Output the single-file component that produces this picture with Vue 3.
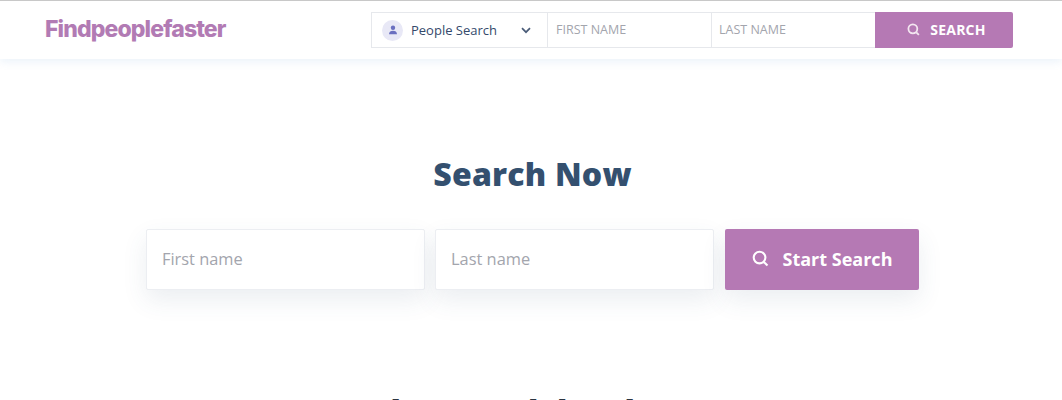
<template>
  <div class="page">
    <header class="top-bar">
      <div class="logo">Findpeoplefaster</div>
      <form class="mini-search" @submit.prevent>
        <div class="type-select">
          <span class="avatar">
            <svg width="10" height="10" viewBox="0 0 10 10">
              <circle cx="5" cy="2.8" r="2.2" fill="#6a6fc0" />
              <path d="M1 9.2c0-2.3 1.8-3.4 4-3.4s4 1.1 4 3.4z" fill="#6a6fc0" />
            </svg>
          </span>
          <span class="type-label">People Search</span>
          <svg class="chevron" width="10" height="7" viewBox="0 0 10 7">
            <path d="M1 1.2l4 4 4-4" fill="none" stroke="#4a5c78" stroke-width="1.7" />
          </svg>
        </div>
        <input class="mini-input first" placeholder="FIRST NAME" />
        <input class="mini-input last" placeholder="LAST NAME" />
        <button class="mini-btn">
          <svg width="13" height="13" viewBox="0 0 14 14">
            <circle cx="6.3" cy="6.3" r="4.8" fill="none" stroke="#f3e6f0" stroke-width="1.9" />
            <path d="M10 10l2.8 2.8" stroke="#f3e6f0" stroke-width="1.9" />
          </svg>
          <span>SEARCH</span>
        </button>
      </form>
    </header>

    <section class="search-now">
      <h1 class="title">Search Now</h1>
      <form class="big-search" @submit.prevent>
        <input class="big-input" placeholder="First name" />
        <input class="big-input" placeholder="Last name" />
        <button class="big-btn">
          <svg width="17" height="17" viewBox="0 0 18 18">
            <circle cx="8" cy="8" r="6.2" fill="none" stroke="#fff" stroke-width="2.2" />
            <path d="M12.6 12.6l3.8 3.8" stroke="#fff" stroke-width="2.2" />
          </svg>
          <span>Start Search</span>
        </button>
      </form>
    </section>

    <section class="why">
      <h2 class="why-title">Why Search by Phone</h2>
    </section>
  </div>
</template>

<script setup>
</script>

<style scoped>
.page {
  font-family: "Open Sans", sans-serif;
  background: #fff;
  height: 400px;
  overflow: hidden;
}
.top-bar {
  height: 59px;
  box-sizing: border-box;
  border-top: 1px solid #c8c8c8;
  padding: 11px 49px 0 45px;
  display: flex;
  justify-content: space-between;
  align-items: flex-start;
  background: #fff;
  box-shadow: 0 3px 8px rgba(120, 170, 220, 0.14);
  position: relative;
}
.logo {
  font-family: Inter, sans-serif;
  font-weight: 800;
  font-size: 23px;
  letter-spacing: -0.88px;
  line-height: 34px;
  color: #b27bb4;
}
.mini-search {
  display: flex;
  height: 36px;
}
.type-select {
  width: 176px;
  box-sizing: border-box;
  border: 1px solid #e6e8ec;
  border-right: none;
  display: flex;
  align-items: center;
  padding-left: 10px;
}
.avatar {
  width: 21px;
  height: 21px;
  border-radius: 50%;
  background: #e8e8f6;
  display: flex;
  align-items: center;
  justify-content: center;
}
.type-label {
  margin-left: 8px;
  padding-bottom: 1px;
  font-size: 13px;
  font-weight: 500;
  color: #34496b;
}
.chevron {
  margin-left: 24px;
}
.mini-input {
  height: 36px;
  box-sizing: border-box;
  border: 1px solid #e6e8ec;
  border-right: none;
  padding: 0 7px 1px 8px;
  font-family: inherit;
  font-size: 12.5px;
  outline: none;
}
.mini-input.first {
  width: 164px;
}
.mini-input.last {
  width: 164px;
  padding-left: 7px;
}
.mini-input::placeholder {
  color: #a3a5ad;
  opacity: 1;
}
.mini-btn {
  width: 138px;
  border: none;
  border-radius: 0 2px 2px 0;
  background: #b579b4;
  color: #fff;
  font-family: inherit;
  font-size: 14px;
  font-weight: 700;
  letter-spacing: 0.2px;
  display: flex;
  align-items: center;
  justify-content: center;
  gap: 10px;
  padding: 0 0 2px 5px;
}
.search-now {
  display: flex;
  flex-direction: column;
  align-items: center;
  padding-left: 3px;
}
.title {
  margin: 95px 0 0;
  font-size: 32px;
  line-height: 40px;
  font-weight: 800;
  letter-spacing: 0.2px;
  color: #34506f;
}
.big-search {
  display: flex;
  margin-top: 35px;
  height: 61px;
  gap: 10px;
}
.big-input {
  width: 279px;
  box-sizing: border-box;
  border: 1px solid #eceef2;
  border-radius: 2px;
  padding: 0 15px 2px;
  font-family: inherit;
  font-size: 16.4px;
  outline: none;
  background: #fff;
  box-shadow: 0 10px 25px rgba(60, 90, 120, 0.1);
}
.big-input::placeholder {
  color: #a3a5ad;
  opacity: 1;
}
.big-btn {
  width: 194px;
  margin-left: 1px;
  border: none;
  border-radius: 2px;
  background: #b579b4;
  color: #fff;
  font-family: inherit;
  font-size: 18px;
  font-weight: 700;
  display: flex;
  align-items: center;
  justify-content: center;
  gap: 14px;
  padding: 0 0 2px;
  box-shadow: 0 10px 25px rgba(60, 90, 120, 0.1);
}
.why {
  text-align: center;
  margin-top: 101px;
  padding-left: 2px;
}
.why-title {
  margin: 0;
  font-size: 32px;
  line-height: 40px;
  font-weight: 800;
  letter-spacing: -0.3px;
  color: #2c3440;
}
</style>

<style>
html, body {
  background: #fff;
}
</style>
